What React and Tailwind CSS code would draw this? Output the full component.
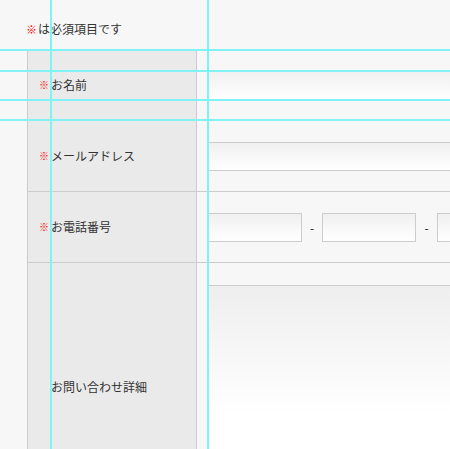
const FONT = { fontFamily: '"Noto Sans CJK JP", "Noto Sans", sans-serif' }

function Req() {
  return <span className="-ml-[12px] inline-block w-[12px] align-top text-[10px] leading-[18px] text-[#ff0000]">※</span>
}

function Label({ required, children }) {
  return (
    <div className="flex items-center border-x border-[#cccccc] bg-[#eaeaea] pl-[23px] text-[12px] leading-[18px] text-[#333333]">
      <span>
        {required && <Req />}
        {children}
      </span>
    </div>
  )
}

const inputCls =
  'h-[29px] border border-[#cccccc] bg-gradient-to-b from-[#f0f0f0] to-[#ffffff]'

function Row({ label, required, children, valueCls = 'pt-[21px] pb-[20px]' }) {
  return (
    <div className="grid grid-cols-[170px_1fr] border-b border-[#cccccc]">
      <Label required={required}>{label}</Label>
      <div className={`pl-[11px] ${valueCls}`}>{children}</div>
    </div>
  )
}

export default function App() {
  return (
    <div className="relative min-h-screen w-[450px] overflow-hidden bg-[#f7f7f7]" style={FONT}>
      <div className="h-[49px] pl-[26px] pt-[20px] text-[12px] leading-[18px] text-[#333333]">
        <span className="mr-[1px] align-top text-[11px] leading-[18px] text-[#ff0000]">※</span>は必須項目です
      </div>

      <div className="ml-[27px] w-[760px] border-t border-[#cccccc]">
        <Row label="お名前" required>
          <div className={`${inputCls} w-[560px]`} />
        </Row>
        <Row label="メールアドレス" required>
          <div className={`${inputCls} w-[560px]`} />
        </Row>
        <Row label="お電話番号" required>
          <div className="flex items-center text-[12px] text-[#222222]">
            <div className={`${inputCls} w-[94px]`} />
            <span className="w-[20px] text-center leading-[18px]">-</span>
            <div className={`${inputCls} w-[94px]`} />
            <span className="w-[21px] text-center leading-[18px]">-</span>
            <div className={`${inputCls} w-[94px]`} />
          </div>
        </Row>
        <Row label="お問い合わせ詳細" valueCls="pt-[22px] pb-[20px]">
          <div className="h-[206px] w-[560px] border border-[#cccccc] bg-[linear-gradient(to_bottom,#eeeeee_0%,#ffffff_63%,#ffffff_100%)]" />
        </Row>
      </div>

      {/* guide lines */}
      <div className="pointer-events-none absolute inset-y-0 left-[50px] w-[2px] bg-[#80f4f4]" />
      <div className="pointer-events-none absolute inset-y-0 left-[207px] w-[2px] bg-[#80f4f4]" />
      <div className="pointer-events-none absolute inset-x-0 top-[49px] h-[2px] bg-[#80f4f4]" />
      <div className="pointer-events-none absolute inset-x-0 top-[70px] h-[2px] bg-[#80f4f4]" />
      <div className="pointer-events-none absolute inset-x-0 top-[99px] h-[2px] bg-[#80f4f4]" />
      <div className="pointer-events-none absolute inset-x-0 top-[119px] h-[2px] bg-[#80f4f4]" />
    </div>
  )
}
